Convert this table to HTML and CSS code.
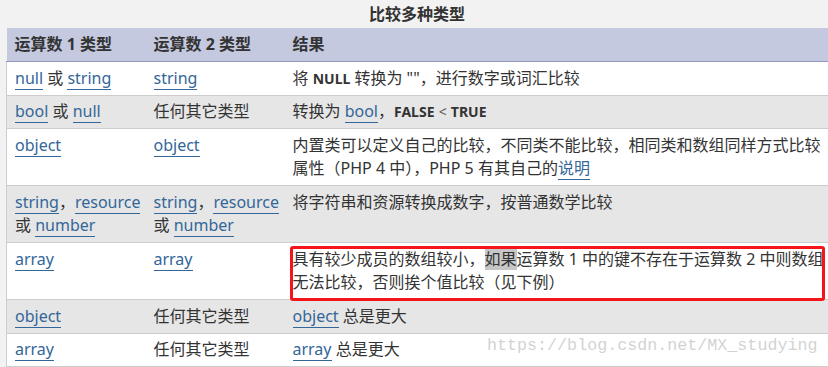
FILE: index.html
```html
<!DOCTYPE html>
<html lang="zh">
<head>
<meta charset="utf-8">
<title>比较多种类型</title>
<link rel="stylesheet" href="styles.css">
</head>
<body>
<div class="page">
  <table class="doctable">
    <caption>比较多种类型</caption>
    <thead>
      <tr><th>运算数 1 类型</th><th>运算数 2 类型</th><th>结果</th></tr>
    </thead>
    <tbody>
      <tr>
        <td><a>null</a> 或 <a>string</a></td>
        <td><a>string</a></td>
        <td>将 <b class="const">NULL</b> 转换为 ""，进行数字或词汇比较</td>
      </tr>
      <tr>
        <td><a>bool</a> 或 <a>null</a></td>
        <td>任何其它类型</td>
        <td>转换为 <a>bool</a>，<b class="const">FALSE</b> <span class="op">&lt;</span> <b class="const">TRUE</b></td>
      </tr>
      <tr>
        <td><a>object</a></td>
        <td><a>object</a></td>
        <td>内置类可以定义自己的比较，不同类不能比较，相同类和数组同样方式比较属性（PHP 4 中），PHP 5 有其自己的<a>说明</a></td>
      </tr>
      <tr>
        <td><a>string</a>，<a>resource</a> 或 <a>number</a></td>
        <td><a>string</a>，<a>resource</a> 或 <a>number</a></td>
        <td>将字符串和资源转换成数字，按普通数学比较</td>
      </tr>
      <tr>
        <td><a>array</a></td>
        <td><a>array</a></td>
        <td class="marked">具有较少成员的数组较小，<span class="sel">如果</span>运算数 1 中的键不存在于运算数 2 中则数组无法比较，否则挨个值比较（见下例）<span class="redbox"></span></td>
      </tr>
      <tr>
        <td><a>object</a></td>
        <td>任何其它类型</td>
        <td><a>object</a> 总是更大</td>
      </tr>
      <tr>
        <td><a>array</a></td>
        <td>任何其它类型</td>
        <td><a>array</a> 总是更大</td>
      </tr>
    </tbody>
  </table>
  <div class="watermark">https://blog.csdn.net/MX_studying</div>
</div>
</body>
</html>
```

FILE: styles.css
```css
html, body {
  margin: 0;
  padding: 0;
  background: #f2f2f2;
  overflow: hidden;
}

body {
  width: 828px;
  height: 367px;
  font-family: "Noto Sans", "Noto Sans CJK SC", sans-serif;
  font-size: 16px;
  color: #333;
}

.page {
  position: relative;
  height: 367px;
  padding-left: 6px;
}

.doctable {
  width: 834px;
  table-layout: fixed;
  border-collapse: collapse;
  border-spacing: 0;
}

.doctable caption {
  height: 28px;
  line-height: 28px;
  font-weight: bold;
  text-align: center;
  padding-right: 12px;
  box-sizing: border-box;
}

.doctable th {
  background: #c4c9df;
  text-align: left;
  font-weight: bold;
  line-height: 25px;
  height: 25px;
  padding: 4px 8px 4px 8px;
  border-bottom: 1px solid #9298bd;
}

.doctable th:nth-child(1),
.doctable th:nth-child(2) {
  width: 123px;
}

.doctable td {
  vertical-align: top;
  line-height: 23.5px;
  padding: 4.5px 8px;
  border-bottom: 1px solid #cdcdcd;
  background: #fff;
}

.doctable td:nth-child(1),
.doctable td:nth-child(2) {
  padding-right: 4px;
}

.doctable td:first-child {
  border-left: 1px solid #cdcdcd;
}

.doctable tbody tr:nth-child(even) td {
  background: #e6e6e6;
}

.doctable a {
  color: #336699;
  text-decoration: none;
  border-bottom: 1px solid #336699;
}

.const {
  font-weight: bold;
  font-size: 14px;
  line-height: 1;
  color: #333;
}

.op {
  color: #555;
  font-size: 14px;
  line-height: 1;
}

.sel {
  background: #c6c6c6;
}

.marked {
  position: relative;
}

.redbox {
  position: absolute;
  left: 5px;
  top: 3px;
  right: 15px;
  bottom: -2px;
  border: 3px solid #f5141a;
  border-radius: 3px;
  pointer-events: none;
}

.watermark {
  position: absolute;
  left: 487px;
  top: 334px;
  font-family: "Liberation Mono", monospace;
  font-size: 16.7px;
  line-height: 24px;
  color: rgba(190, 190, 190, 0.7);
  white-space: nowrap;
}
```
